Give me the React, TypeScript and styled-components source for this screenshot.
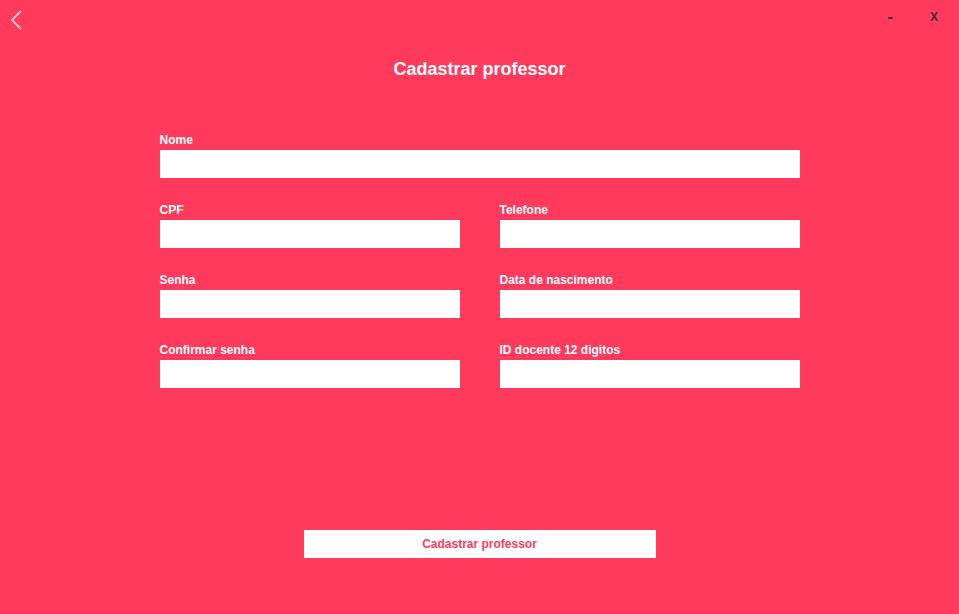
import React from 'react';
import styled, { createGlobalStyle } from 'styled-components';

const GlobalStyle = createGlobalStyle`
	html, body {
		margin: 0;
		padding: 0;
		background: #ff3a5c;
	}
	* {
		box-sizing: border-box;
	}
`;

const Page = styled.div`
	width: 959px;
	height: 614px;
	background: #ff3a5c;
	font-family: 'Liberation Sans', Arial, sans-serif;
	display: flex;
	flex-direction: column;
	align-items: center;
	overflow: hidden;
`;

const TopBar = styled.div`
	width: 100%;
	height: 40px;
	display: flex;
	justify-content: space-between;
	align-items: flex-start;
`;

const BackButton = styled.button`
	border: 0;
	background: transparent;
	padding: 0;
	margin: 10px 0 0 9px;
	width: 16px;
	height: 20px;
	cursor: pointer;
	display: flex;
`;

const WindowControls = styled.div`
	display: flex;
	align-items: center;
	height: 14px;
	margin-top: 10px;
	margin-right: 21px;
	gap: 37px;
`;

const ControlButton = styled.button<{ $big?: boolean }>`
	border: 0;
	background: transparent;
	padding: 0;
	font-family: 'Liberation Sans', Arial, sans-serif;
	font-weight: bold;
	font-size: ${(p) => (p.$big ? '17px' : '12px')};
	line-height: 14px;
	height: 14px;
	color: #333333;
	cursor: pointer;
`;

const Title = styled.h1`
	margin: 18px 0 0;
	font-size: 18px;
	line-height: 22px;
	font-weight: bold;
	color: #ffffff;
`;

const Form = styled.form`
	width: 640px;
	margin-top: 53px;
	display: grid;
	grid-template-columns: 300px 300px;
	column-gap: 40px;
	row-gap: 25px;
`;

const Field = styled.div<{ $wide?: boolean }>`
	display: flex;
	flex-direction: column;
	gap: 3px;
	grid-column: ${(p) => (p.$wide ? '1 / span 2' : 'auto')};
`;

const Label = styled.label`
	font-size: 12px;
	line-height: 14px;
	font-weight: bold;
	color: #ffffff;
`;

const Input = styled.input`
	width: 100%;
	height: 28px;
	border: 0;
	outline: none;
	background: #ffffff;
	padding: 0 8px;
	font-family: 'Liberation Sans', Arial, sans-serif;
	font-size: 12px;
`;

const SubmitButton = styled.button`
	margin-top: 142px;
	width: 352px;
	height: 28px;
	border: 0;
	background: #ffffff;
	color: #ff3a5c;
	font-family: 'Liberation Sans', Arial, sans-serif;
	font-weight: bold;
	font-size: 12px;
	cursor: pointer;
`;

const fields: { label: string; type?: string; wide?: boolean }[] = [
	{ label: 'Nome', wide: true },
	{ label: 'CPF' },
	{ label: 'Telefone' },
	{ label: 'Senha', type: 'password' },
	{ label: 'Data de nascimento' },
	{ label: 'Confirmar senha', type: 'password' },
	{ label: 'ID docente 12 digitos' }
];

const App = () => {
	return (
		<>
			<GlobalStyle />
			<Page>
				<TopBar>
					<BackButton aria-label='Voltar'>
						<svg width='16' height='20' viewBox='0 0 16 20'>
							<path d='M12 1 L3 10 L12 19' fill='none' stroke='#ffc6d0' strokeWidth='2' />
						</svg>
					</BackButton>
					<WindowControls>
						<ControlButton $big>-</ControlButton>
						<ControlButton>X</ControlButton>
					</WindowControls>
				</TopBar>
				<Title>Cadastrar professor</Title>
				<Form onSubmit={(e) => e.preventDefault()}>
					{fields.map((f) => (
						<Field key={f.label} $wide={f.wide}>
							<Label>{f.label}</Label>
							<Input type={f.type || 'text'} />
						</Field>
					))}
				</Form>
				<SubmitButton>Cadastrar professor</SubmitButton>
			</Page>
		</>
	);
};

export default App;
